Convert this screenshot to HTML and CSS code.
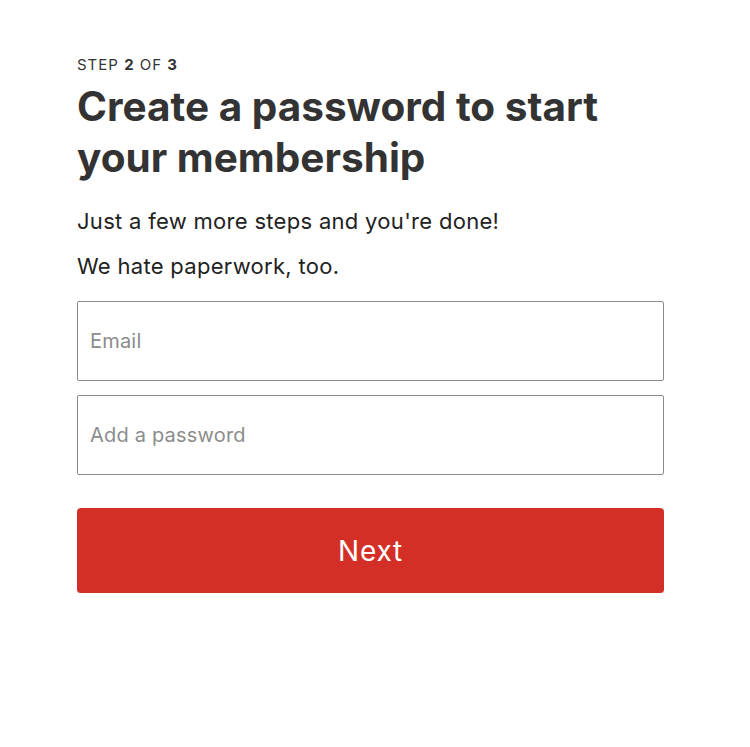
FILE: index.html
```html
<!DOCTYPE html>
<html lang="en">
<head>
    <meta charset="UTF-8">
    <meta name="viewport" content="width=device-width, initial-scale=1.0">
    <title>Sign up - Step 2</title>
    <link rel="stylesheet" href="styles.css">
</head>
<body>
    <div class="container">
        <div class="step-header">
            <span class="step-indicator">Step <b>2</b> of <b>3</b></span>
            <h1 class="step-title">Create a password to start your membership</h1>
        </div>
        <div class="context-body">
            <p>Just a few more steps and you're done!</p>
            <p>We hate paperwork, too.</p>
        </div>
        <form class="reg-form">
            <input class="field" type="email" placeholder="Email">
            <input class="field" type="password" placeholder="Add a password">
            <button class="next-button" type="button">Next</button>
        </form>
    </div>
</body>
</html>
```

FILE: styles.css
```css
/* Basic page styling */
body {
    margin: 0;
    background-color: #ffffff;
    color: #333333;
    font-family: Inter, "Noto Sans", sans-serif;
}
/* Main column */
.container {
    width: 587px;
    padding: 56px 0 0 77px;
}
/* Step label and title */
.step-indicator {
    display: block;
    font-size: 15px;
    line-height: 18px;
    text-transform: uppercase;
    letter-spacing: 1px;
}
.step-indicator b {
    font-weight: 700;
}
.step-title {
    margin: 7px 0 0;
    font-size: 40.5px;
    line-height: 51px;
    font-weight: 700;
}
/* Small intro text */
.context-body {
    margin-top: 24px;
}
.context-body p {
    margin: 0 0 17px;
    font-size: 22px;
    line-height: 28px;
    letter-spacing: 0.3px;
    color: #222222;
}
.context-body p:last-child {
    margin-bottom: 0;
}
/* Form fields */
.reg-form {
    display: flex;
    flex-direction: column;
    gap: 14px;
    margin-top: 21px;
}
.field {
    box-sizing: border-box;
    height: 80px;
    padding: 0 12px;
    border: 1px solid #8c8c8c;
    border-radius: 2px;
    font-family: inherit;
    font-size: 20px;
    letter-spacing: 0.2px;
    color: #333;
}
.field::placeholder {
    color: #8c8c8c;
}
/* Red Next button */
.next-button {
    height: 85px;
    margin-top: 19px;
    border: none;
    border-radius: 4px;
    background-color: #d32f27;
    color: #ffffff;
    font-family: inherit;
    font-size: 28px;
    letter-spacing: 0.8px;
    cursor: pointer;
    box-shadow: 0 1px 0 rgba(0, 0, 0, 0.15);
}
```
